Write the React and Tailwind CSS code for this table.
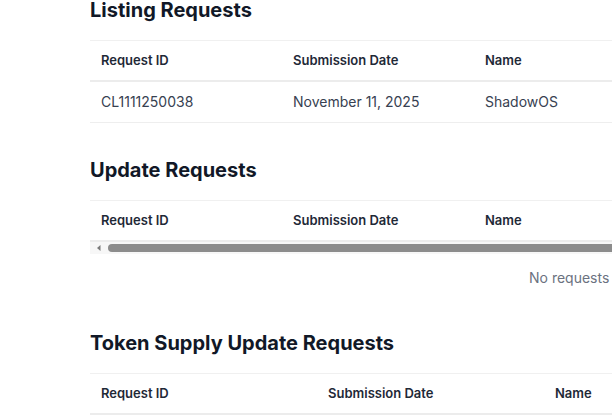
import React from "react";

const font = { fontFamily: "Inter, 'Noto Sans', sans-serif" };

const Header = ({ cols, width }) => (
  <div className="flex h-[42px] items-center border-t border-b-2 border-t-[#f0f0f0] border-b-[#ececec]">
    {cols.map((c) => (
      <div
        key={c}
        className={`${width} shrink-0 pl-[11px] text-[13px] font-semibold text-[#1f2937]`}
      >
        {c}
      </div>
    ))}
  </div>
);

const Heading = ({ children }) => (
  <h2 className="text-xl font-bold leading-7 text-[#111827]">{children}</h2>
);

const App = () => {
  const cols = ["Request ID", "Submission Date", "Name"];

  return (
    <div style={font} className="w-[612px] h-[419px] overflow-hidden bg-white pl-[90px]">
      <div className="w-[900px] -mt-[4px]">
        {/* Listing Requests */}
        <section className="mb-[33px]">
          <Heading>Listing Requests</Heading>
          <div className="mt-4">
            <Header cols={cols} width="w-[192px]" />
            <div className="flex h-[41px] items-center border-b border-[#eeeeee] text-sm text-[#374151]">
              <div className="w-[192px] shrink-0 pl-[11px]">CL1111250038</div>
              <div className="w-[192px] shrink-0 pl-[11px]">November 11, 2025</div>
              <div className="w-[192px] shrink-0 pl-[11px]">ShadowOS</div>
            </div>
          </div>
        </section>

        {/* Update Requests */}
        <section className="mb-[41px]">
          <Heading>Update Requests</Heading>
          <div className="mt-4">
            <Header cols={cols} width="w-[192px]" />
            <div className="flex h-[12px] items-center bg-[#f7f7f7]">
              <svg width="10" height="10" viewBox="0 0 10 10" className="ml-[4px] shrink-0">
                <path d="M6.5 2 L3 5 L6.5 8 Z" fill="#7a7a7a" />
              </svg>
              <div className="ml-[4px] h-[8px] flex-1 rounded-full bg-[#8c8c8c]" />
            </div>
            <div className="mt-[14px] h-5 pl-[439px] text-sm leading-5 text-[#6b7280]">
              No requests
            </div>
          </div>
        </section>

        {/* Token Supply Update Requests */}
        <section>
          <Heading>Token Supply Update Requests</Heading>
          <div className="mt-4">
            <Header cols={cols} width="w-[227px]" />
          </div>
        </section>
      </div>
    </div>
  );
};

export default App;
